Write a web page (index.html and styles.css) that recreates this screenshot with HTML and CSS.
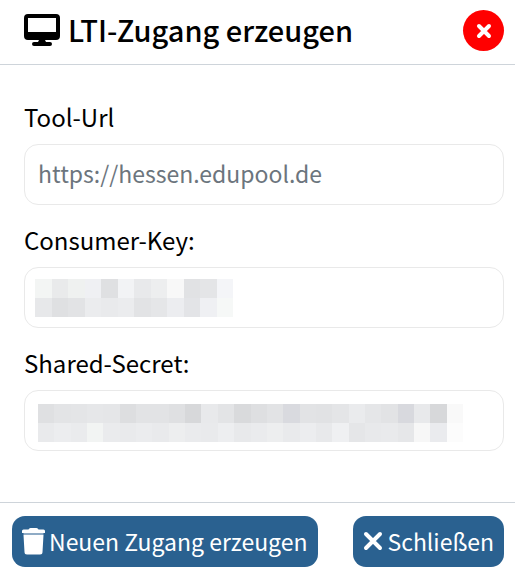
FILE: index.html
```html
<!DOCTYPE html>
<html lang="de">
<head>
<meta charset="utf-8">
<meta name="viewport" content="width=device-width, initial-scale=1">
<title>LTI-Zugang erzeugen</title>
<link rel="stylesheet" href="styles.css">
</head>
<body>
<main class="dialog" role="dialog" aria-labelledby="dialog-title">
  <header class="dialog-header">
    <h1 class="dialog-title" id="dialog-title">
      <svg class="icon-screen" viewBox="0 0 36 32" aria-hidden="true"><path fill="currentColor" fill-rule="evenodd" d="M4 0h28a4 4 0 0 1 4 4v18a4 4 0 0 1-4 4H21l1 2h4a2 2 0 0 1 0 4H10a2 2 0 0 1 0-4h4l1-2H4a4 4 0 0 1-4-4V4a4 4 0 0 1 4-4zM4 4v14h28V4z"/></svg>
      <span>LTI-Zugang erzeugen</span>
    </h1>
    <button class="close" type="button" aria-label="Dialog schließen">
      <svg class="icon-close" viewBox="0 0 16 16" aria-hidden="true"><path d="M3 3l10 10M13 3L3 13"/></svg>
    </button>
  </header>

  <form class="dialog-body" id="lti-form">
    <div class="field">
      <label for="tool-url">Tool-Url</label>
      <input id="tool-url" type="text" placeholder="https://hessen.edupool.de">
    </div>
    <div class="field">
      <label for="consumer-key">Consumer-Key:</label>
      <div class="masked">
        <input id="consumer-key" type="text" readonly>
        <svg class="mask mask-key" viewBox="0 0 12 2" preserveAspectRatio="none" shape-rendering="crispEdges" aria-hidden="true" data-cells="f3f5f4 e9eaeb eff1f0 eff0f3 dfe0e2 f2f3f5 e8e9eb edeeef f8f8f8 e1e2e4 e4e5e7 f4f5f8 / e7e8ea dfe0e2 e2e3e5 ebecee e9eaec ebecee e2e3e5 e5e6e8 ecedf0 e3e4e7 eff0f3 f6f8f7"></svg>
      </div>
    </div>
    <div class="field">
      <label for="shared-secret">Shared-Secret:</label>
      <div class="masked">
        <input id="shared-secret" type="text" readonly>
        <svg class="mask mask-secret" viewBox="0 0 26 2" preserveAspectRatio="none" shape-rendering="crispEdges" aria-hidden="true" data-cells="dfe0e2 e3e4e6 e4e5e7 e6e7e9 e5e6e8 dddee0 e2e3e5 e2e3e5 dfe0e2 d7d8da e8e9eb e3e4e6 d9dadc dedfe1 e2e3e5 d9dadf e2e3e5 e1e2e4 e4e5e7 eaebed e5e6e8 e2e3e5 d8d9de e8e9eb d7d8da f9f9f9 / e9eaec ecedef eaebed f2f4f3 eaebed e9eaec ebecee e9eaec edeeef eaebed e9eaec edeef0 e8e9eb eaebed edeeef e9eaec ecedef e8e9eb eff0f2 e5e6e8 e8e9eb e9eaec e6e7e9 f7f7f7 eaebee fcfcfc"></svg>
      </div>
    </div>
  </form>

  <footer class="dialog-footer">
    <button class="button" type="submit" form="lti-form">
      <svg class="icon-trash" viewBox="0 0 23 28" aria-hidden="true"><path fill="currentColor" d="M8.500 1h6q1.500 0 2 1.500h5a1.500 1.500 0 0 1 1.500 1.500v2H0V4a1.500 1.500 0 0 1 1.500-1.500h5Q7 1 8.500 1zM1.500 8h20l-1 17a2.500 2.500 0 0 1-2.500 2.500H5a2.500 2.500 0 0 1-2.500-2.500z"/><path fill="#8fabc5" d="M1.500 6h20v2h-20z"/></svg>
      <span>Neuen Zugang erzeugen</span>
    </button>
    <button class="button" type="button">
      <svg class="icon-x" viewBox="0 0 20 20" aria-hidden="true"><path d="M3 3l14 14M17 3L3 17"/></svg>
      <span>Schließen</span>
    </button>
  </footer>
</main>
<script src="mask.js"></script>
</body>
</html>
```
FILE: styles.css
```css
* {
  box-sizing: border-box;
}

body {
  margin: 0;
  background: #fff;
  color: #000;
  font: 24px/38px "Noto Sans CJK SC", "Noto Sans", sans-serif;
}

.dialog-header {
  display: flex;
  align-items: center;
  justify-content: space-between;
  padding: 10px 11px 13px 24px;
  border-bottom: 1px solid #ced4da;
}

.dialog-title {
  display: flex;
  align-items: center;
  gap: 8px;
  margin: 0;
  padding-bottom: 2px;
  font-size: 29px;
  font-weight: 500;
  line-height: 39px;
}

.icon-screen {
  width: 36px;
  height: 32px;
}

.close {
  display: flex;
  align-items: center;
  justify-content: center;
  width: 41px;
  height: 41px;
  padding: 0;
  border: 0;
  border-radius: 50%;
  background: #f00;
  color: #fff;
}

.icon-close {
  width: 16px;
  height: 16px;
}

.icon-close path,
.icon-x path {
  fill: none;
  stroke: currentColor;
  stroke-linecap: round;
  stroke-width: 4;
}

.dialog-body {
  display: grid;
  gap: 16px;
  padding: 33px 11px 51px 24px;
}

.field {
  display: grid;
  gap: 8px;
}

.masked {
  position: relative;
}

input {
  display: block;
  width: 100%;
  height: 61px;
  padding: 0 13px 3px;
  border: 1px solid #e9e9e9;
  border-radius: 14px;
  background: #fff;
  color: inherit;
  font: inherit;
  font-size: 23px;
}

input::placeholder {
  color: #6c757d;
  opacity: 1;
}

.mask {
  position: absolute;
  pointer-events: none;
}

.mask-key {
  top: 12px;
  left: 11px;
  width: 198px;
  height: 38px;
}

.mask-secret {
  top: 14px;
  left: 14px;
  width: 425px;
  height: 38px;
}

.dialog-footer {
  display: flex;
  align-items: center;
  justify-content: space-between;
  padding: 13px 11px 11px 12px;
  border-top: 1px solid #ced4da;
}

.button {
  display: flex;
  align-items: center;
  gap: 4px;
  height: 51px;
  padding: 0 10px 2px;
  border: 0;
  border-radius: 13px;
  background: #2a6190;
  color: #fff;
  font: inherit;
  font-size: 23px;
  white-space: nowrap;
}

.icon-trash {
  width: 23px;
  height: 28px;
}

.icon-x {
  width: 20px;
  height: 20px;
}
```
FILE: mask.js
```js
document.querySelectorAll(".mask").forEach((mask) => {
  mask.dataset.cells.split(" / ").forEach((row, y) => {
    row.split(" ").forEach((colour, x) => {
      const cell = document.createElementNS("http://www.w3.org/2000/svg", "rect");
      cell.setAttribute("x", x);
      cell.setAttribute("y", y);
      cell.setAttribute("width", 1);
      cell.setAttribute("height", 1);
      cell.setAttribute("fill", "#" + colour);
      mask.append(cell);
    });
  });
});
```
